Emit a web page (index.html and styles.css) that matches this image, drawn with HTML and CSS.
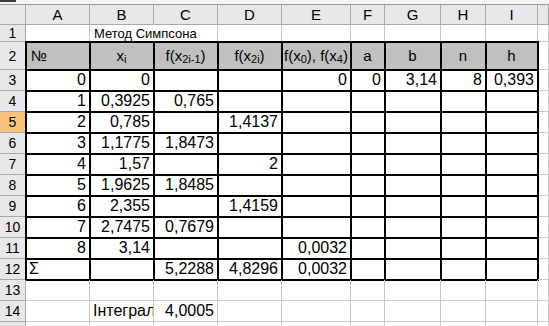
FILE: index.html
```html
<!DOCTYPE html>
<html lang="uk">
<head>
<meta charset="utf-8">
<title>Метод Симпсона</title>
<link rel="stylesheet" href="styles.css">
</head>
<body>
<div class="sheet">
  <div class="topbar"><span class="topblock"></span></div>
  <div class="grid">
    <div class="hd corner"></div>
    <div class="hd">A</div><div class="hd">B</div><div class="hd">C</div><div class="hd">D</div><div class="hd">E</div><div class="hd">F</div><div class="hd">G</div><div class="hd">H</div><div class="hd">I</div><div class="hd"></div>

    <div class="hd rowh">1</div>
    <div class="c"></div><div class="c title">Метод Симпсона</div><div class="c"></div><div class="c"></div><div class="c"></div><div class="c"></div><div class="c"></div><div class="c"></div><div class="c"></div>

    <div class="hd rowh">2</div>
    <div class="t th left">№</div>
    <div class="t th">x<span class="sb">i</span></div>
    <div class="t th">f(x<span class="sb">2i-1</span>)</div>
    <div class="t th">f(x<span class="sb">2i</span>)</div>
    <div class="t th">f(x<span class="sb">0</span>), f(x<span class="sb">4</span>)</div>
    <div class="t th">a</div>
    <div class="t th">b</div>
    <div class="t th">n</div>
    <div class="t th">h</div>
    <div class="c"></div>

    <div class="hd rowh">3</div>
    <div class="t num">0</div><div class="t num">0</div><div class="t"></div><div class="t"></div><div class="t num">0</div><div class="t num">0</div><div class="t num">3,14</div><div class="t num">8</div><div class="t num">0,393</div><div class="c"></div>

    <div class="hd rowh">4</div>
    <div class="t num">1</div><div class="t num">0,3925</div><div class="t num">0,765</div><div class="t"></div><div class="t"></div><div class="t"></div><div class="t"></div><div class="t"></div><div class="t"></div><div class="c"></div>

    <div class="hd rowh sel">5</div>
    <div class="t num">2</div><div class="t num">0,785</div><div class="t"></div><div class="t num">1,4137</div><div class="t"></div><div class="t"></div><div class="t"></div><div class="t"></div><div class="t"></div><div class="c"></div>

    <div class="hd rowh">6</div>
    <div class="t num">3</div><div class="t num">1,1775</div><div class="t num">1,8473</div><div class="t"></div><div class="t"></div><div class="t"></div><div class="t"></div><div class="t"></div><div class="t"></div><div class="c"></div>

    <div class="hd rowh">7</div>
    <div class="t num">4</div><div class="t num">1,57</div><div class="t"></div><div class="t num">2</div><div class="t"></div><div class="t"></div><div class="t"></div><div class="t"></div><div class="t"></div><div class="c"></div>

    <div class="hd rowh">8</div>
    <div class="t num">5</div><div class="t num">1,9625</div><div class="t num">1,8485</div><div class="t"></div><div class="t"></div><div class="t"></div><div class="t"></div><div class="t"></div><div class="t"></div><div class="c"></div>

    <div class="hd rowh">9</div>
    <div class="t num">6</div><div class="t num">2,355</div><div class="t"></div><div class="t num">1,4159</div><div class="t"></div><div class="t"></div><div class="t"></div><div class="t"></div><div class="t"></div><div class="c"></div>

    <div class="hd rowh">10</div>
    <div class="t num">7</div><div class="t num">2,7475</div><div class="t num">0,7679</div><div class="t"></div><div class="t"></div><div class="t"></div><div class="t"></div><div class="t"></div><div class="t"></div><div class="c"></div>

    <div class="hd rowh">11</div>
    <div class="t num">8</div><div class="t num">3,14</div><div class="t"></div><div class="t"></div><div class="t num">0,0032</div><div class="t"></div><div class="t"></div><div class="t"></div><div class="t"></div><div class="c"></div>

    <div class="hd rowh">12</div>
    <div class="t">Σ</div><div class="t"></div><div class="t num">5,2288</div><div class="t num">4,8296</div><div class="t num">0,0032</div><div class="t"></div><div class="t"></div><div class="t"></div><div class="t"></div><div class="c"></div>

    <div class="hd rowh">13</div>
    <div class="c"></div><div class="c"></div><div class="c"></div><div class="c"></div><div class="c"></div><div class="c"></div><div class="c"></div><div class="c"></div><div class="c"></div><div class="c"></div>

    <div class="hd rowh">14</div>
    <div class="c"></div><div class="c">Інтеграл</div><div class="c num">4,0005</div><div class="c"></div><div class="c"></div><div class="c"></div><div class="c"></div><div class="c"></div><div class="c"></div><div class="c"></div>

    <div class="hd rowh">15</div>
    <div class="c"></div><div class="c"></div><div class="c"></div><div class="c"></div><div class="c"></div><div class="c"></div><div class="c"></div><div class="c"></div><div class="c"></div><div class="c"></div>
  </div>
</div>
</body>
</html>
```

FILE: styles.css
```css
html, body {
  margin: 0;
  padding: 0;
  background: #fff;
}

.sheet {
  width: 549px;
  height: 326px;
  overflow: hidden;
  font-family: "Liberation Sans", Arial, sans-serif;
  color: #000;
}

.topbar {
  height: 4px;
  display: flex;
  background: #f4f4f4;
  border-bottom: 1px solid #9c9c9c;
}

.topblock {
  width: 16px;
  height: 2px;
  background: #3a3a3a;
}

.grid {
  display: grid;
  grid-template-columns: 26px 64px 64px 64px 64px 69px 34px 56px 45px 52px 1fr;
  grid-template-rows: 20px 17px 28px repeat(13, 21px);
}

.grid > div {
  box-sizing: border-box;
  display: flex;
  align-items: center;
  white-space: nowrap;
  overflow: hidden;
  padding: 0 3px;
  font-size: 16px;
  border-right: 1px solid #c8c8c8;
  border-bottom: 1px solid #c8c8c8;
}

.grid > .hd {
  justify-content: center;
  background: #e8e8ea;
  border-right-color: #a9a9ad;
  border-bottom-color: #a9a9ad;
  font-size: 15px;
  padding: 0;
}

.grid > .rowh {
  font-size: 14px;
}

.grid > .sel {
  background: #f7c47a;
}

.grid > .title {
  grid-column: span 2;
  font-size: 13px;
  padding-left: 4px;
}

.t {
  outline: 2px solid #000;
  outline-offset: -1px;
}

.grid > .th {
  justify-content: center;
  background: #c0c0c0;
  font-size: 15px;
}

.grid > .left {
  justify-content: flex-start;
  padding-left: 5px;
}

.grid > .num {
  justify-content: flex-end;
}

.sb {
  font-size: 11px;
  position: relative;
  top: 3px;
}
```
